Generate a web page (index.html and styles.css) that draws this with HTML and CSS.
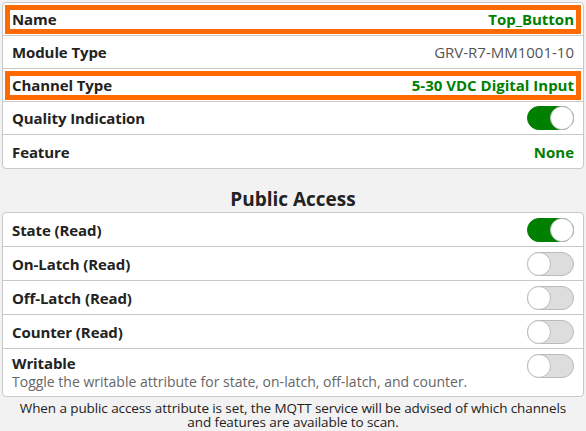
FILE: index.html
```html
<!DOCTYPE html>
<html lang="en">
<head>
  <meta charset="UTF-8">
  <meta name="viewport" content="width=device-width, initial-scale=1.0">
  <title>Channel Settings</title>
  <link rel="stylesheet" href="styles.css">
</head>
<body>
  <div class="page">
    <div class="card">
      <div class="row highlight">
        <span class="label">Name</span>
        <span class="value green">Top_Button</span>
      </div>
      <div class="row">
        <span class="label">Module Type</span>
        <span class="value plain">GRV-R7-MM1001-10</span>
      </div>
      <div class="row highlight">
        <span class="label">Channel Type</span>
        <span class="value green">5-30 VDC Digital Input</span>
      </div>
      <div class="row">
        <span class="label">Quality Indication</span>
        <span class="toggle on"></span>
      </div>
      <div class="row">
        <span class="label">Feature</span>
        <span class="value green">None</span>
      </div>
    </div>

    <h3>Public Access</h3>

    <div class="card">
      <div class="row tall">
        <span class="label">State (Read)</span>
        <span class="toggle on"></span>
      </div>
      <div class="row tall">
        <span class="label">On-Latch (Read)</span>
        <span class="toggle"></span>
      </div>
      <div class="row tall">
        <span class="label">Off-Latch (Read)</span>
        <span class="toggle"></span>
      </div>
      <div class="row tall">
        <span class="label">Counter (Read)</span>
        <span class="toggle"></span>
      </div>
      <div class="row top">
        <div>
          <div class="label">Writable</div>
          <div class="desc">Toggle the writable attribute for state, on-latch, off-latch, and counter.</div>
        </div>
        <span class="toggle"></span>
      </div>
    </div>

    <p class="note">When a public access attribute is set, the MQTT service will be advised of which channels and features are available to scan.</p>
  </div>
</body>
</html>
```

FILE: styles.css
```css
body {
  margin: 0;
  background: #f2f2f2;
  font-family: "Open Sans", "Noto Sans", sans-serif;
  color: #222;
}
.page {
  padding: 2px;
}
.card {
  background: white;
  border: 1px solid #c8c8c8;
  border-radius: 4px;
}
.row {
  display: flex;
  justify-content: space-between;
  align-items: center;
  min-height: 33px;
  padding: 0 9px;
  border-bottom: 1px solid #c8c8c8;
  box-sizing: border-box;
}
.row:last-child {
  border-bottom: none;
}
.row.tall {
  min-height: 34px;
}
.row.top {
  align-items: flex-start;
  padding-top: 4px;
  padding-bottom: 5px;
}
.highlight {
  outline: 5px solid #ff6a00;
  outline-offset: -7px;
}
.label {
  font-weight: bold;
  font-size: 15px;
  letter-spacing: -0.1px;
}
.value {
  font-size: 15px;
}
.green {
  color: #008000;
  font-weight: bold;
}
.plain {
  color: #555;
}
.desc {
  font-size: 14px;
  color: #666;
  line-height: 18px;
}
.toggle {
  position: relative;
  display: block;
  width: 45px;
  height: 22px;
  border-radius: 12px;
  background: #ddd;
  border: 1px solid #bbb;
  flex-shrink: 0;
}
.row.top .toggle {
  margin-top: 1px;
}
.toggle::after {
  content: "";
  position: absolute;
  top: -1px;
  left: -1px;
  width: 22px;
  height: 22px;
  border-radius: 50%;
  background: white;
  border: 1px solid #bbb;
}
.toggle.on {
  background: #008000;
  border-color: #008000;
}
.toggle.on::after {
  left: auto;
  right: -1px;
}
h3 {
  text-align: center;
  font-size: 19px;
  line-height: 24px;
  margin: 18px 0 1px;
  color: #222;
}
.note {
  text-align: center;
  font-size: 13.5px;
  line-height: 14px;
  margin: 4px 10px 0;
  letter-spacing: -0.1px;
}
```
